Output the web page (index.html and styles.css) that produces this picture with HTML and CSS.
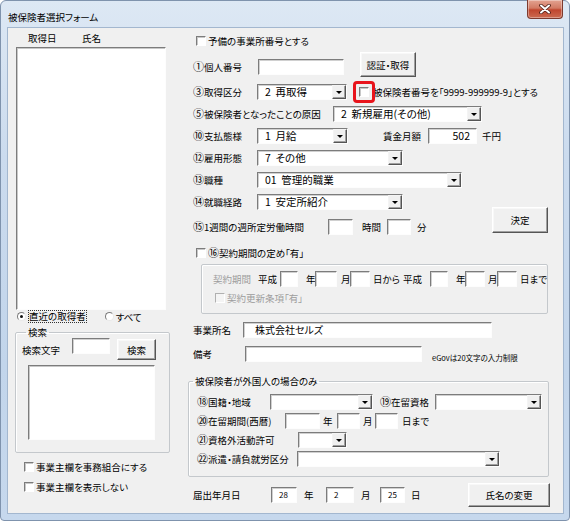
FILE: index.html
```html
<!DOCTYPE html>
<html lang="ja">
<head>
<meta charset="utf-8">
<title>被保険者選択フォーム</title>
<link rel="stylesheet" href="styles.css">
</head>
<body>
<div class="window">
  <div class="titlebar">
    <span class="title">被保険者選択フォーム</span>
    <div class="close"><svg width="14" height="10" viewBox="0 0 14 10"><path d="M3 1.5 L11 8.5 M11 1.5 L3 8.5" stroke="#4a1d15" stroke-width="3.6" stroke-linecap="round"/><path d="M3 1.5 L11 8.5 M11 1.5 L3 8.5" stroke="#fff" stroke-width="2" stroke-linecap="round"/></svg></div>
  </div>
  <div class="client">
    <div class="left">
      <div class="lhead"><span class="lh-date">取得日</span><span>氏名</span></div>
      <div class="listbox list-main"></div>
      <div class="radios">
        <span class="rb on"></span><span class="focus">直近の取得者</span>
        <span class="rb rb2"></span><span class="rtext">すべて</span>
      </div>
      <fieldset class="grp grp-search">
        <legend>検索</legend>
        <div class="srow">
          <span class="s-label">検索文字</span>
          <span class="tb s-input"></span>
          <span class="btn s-btn">検索</span>
        </div>
        <div class="listbox list-search"></div>
      </fieldset>
      <div class="lcb lcb1"><span class="cb"></span><span class="cbt">事業主欄を事務組合にする</span></div>
      <div class="lcb lcb2"><span class="cb"></span><span class="cbt">事業主欄を表示しない</span></div>
    </div>

    <div class="right">
      <div class="row r-yobi"><span class="cb"></span><span class="cbt">予備の事業所番号とする</span></div>

      <div class="row r-kojin">
        <span class="lbl w65 shift"><span class="cn">①</span>個人番号</span>
        <span class="tb in-kojin shift"></span>
        <span class="btn b-ninsho">認証・取得</span>
      </div>

      <div class="row r-kubun">
        <span class="lbl w64"><span class="cn">③</span>取得区分</span>
        <div class="sel sw90"><span class="val">2&nbsp;&nbsp;再取得</span><span class="arr"></span></div>
        <span class="mark"><span class="cb"></span></span>
        <span class="cbt narrow">被保険者番号を「9999-999999-9」とする</span>
      </div>

      <div class="row r-std r-genin">
        <span class="lbl w140"><span class="cn">⑤</span>被保険者となったことの原因</span>
        <div class="sel sw149"><span class="val">2&nbsp;&nbsp;新規雇用(その他)</span><span class="arr"></span></div>
      </div>

      <div class="row r-std">
        <span class="lbl w64"><span class="cn">⑩</span>支払態様</span>
        <div class="sel sw91"><span class="val">1&nbsp;&nbsp;月給</span><span class="arr"></span></div>
        <span class="lbl chingin">賃金月額</span>
        <span class="tb in-chingin">502</span>
        <span class="lbl senen">千円</span>
      </div>

      <div class="row r-std">
        <span class="lbl w64"><span class="cn">⑫</span>雇用形態</span>
        <div class="sel sw146"><span class="val">7&nbsp;&nbsp;その他</span><span class="arr"></span></div>
      </div>

      <div class="row r-std">
        <span class="lbl w64"><span class="cn">⑬</span>職種</span>
        <div class="sel sw205"><span class="val">01&nbsp;&nbsp;管理的職業</span><span class="arr"></span></div>
      </div>

      <div class="row r-std">
        <span class="lbl w64"><span class="cn">⑭</span>就職経路</span>
        <div class="sel sw146"><span class="val">1&nbsp;&nbsp;安定所紹介</span><span class="arr"></span></div>
      </div>

      <div class="row r-jikan">
        <span class="lbl w135"><span class="cn">⑮</span>1週間の週所定労働時間</span>
        <span class="tb in-h"></span>
        <span class="lbl jikan">時間</span>
        <span class="tb in-m"></span>
        <span class="lbl fun">分</span>
        <span class="btn b-kettei">決定</span>
      </div>

      <div class="row r-keiyaku-cb"><span class="cb"></span><span class="cbt"><span class="cn">⑯</span>契約期間の定め「有」</span></div>

      <div class="grp-keiyaku">
        <div class="krow">
          <span class="lbl dis k-kikan">契約期間</span>
          <span class="lbl k-heisei">平成</span>
          <span class="tb kw18"></span>
          <span class="lbl k-nen">年</span>
          <span class="tb kw22"></span>
          <span class="lbl k-tsuki">月</span>
          <span class="tb kw20"></span>
          <span class="lbl k-kara">日から</span>
          <span class="lbl k-heisei2">平成</span>
          <span class="tb kw18"></span>
          <span class="lbl k-nen">年</span>
          <span class="tb kw20"></span>
          <span class="lbl k-tsuki2">月</span>
          <span class="tb kw20"></span>
          <span class="lbl k-made">日まで</span>
        </div>
        <div class="krow2"><span class="cb dis-cb"></span><span class="cbt dis">契約更新条項「有」</span></div>
      </div>

      <div class="row r-std r-jigyo">
        <span class="lbl w50">事業所名</span>
        <span class="tb in-jigyo">株式会社セルズ</span>
      </div>

      <div class="row r-std r-biko">
        <span class="lbl w52">備考</span>
        <span class="tb in-biko"></span>
        <span class="egov">eGovは20文字の入力制限</span>
      </div>

      <fieldset class="grp grp-gai">
        <legend>被保険者が外国人の場合のみ</legend>
        <div class="grow g1">
          <span class="lbl w73"><span class="cn">⑱</span>国籍・地域</span>
          <div class="sel sw103"><span class="val"></span><span class="arr"></span></div>
          <span class="lbl zairyu"><span class="cn">⑲</span>在留資格</span>
          <div class="sel sw107"><span class="val"></span><span class="arr"></span></div>
        </div>
        <div class="grow">
          <span class="lbl w88"><span class="cn">⑳</span>在留期間(西暦)</span>
          <span class="tb gw35"></span>
          <span class="lbl g-nen">年</span>
          <span class="tb gw23"></span>
          <span class="lbl g-tsuki">月</span>
          <span class="tb gw23"></span>
          <span class="lbl g-made">日まで</span>
        </div>
        <div class="grow">
          <span class="lbl w101"><span class="cn">㉑</span>資格外活動許可</span>
          <div class="sel sw49"><span class="val"></span><span class="arr"></span></div>
        </div>
        <div class="grow">
          <span class="lbl w100"><span class="cn">㉒</span>派遣・請負就労区分</span>
          <div class="sel sw203"><span class="val"></span><span class="arr"></span></div>
        </div>
      </fieldset>

      <div class="row r-todoke">
        <span class="lbl w78">届出年月日</span>
        <span class="tb dt dw26">28</span>
        <span class="lbl t-nen">年</span>
        <span class="tb dt dw28">2</span>
        <span class="lbl t-tsuki">月</span>
        <span class="tb dt dw25">25</span>
        <span class="lbl t-hi">日</span>
        <span class="btn b-henko">氏名の変更</span>
      </div>
    </div>
  </div>
</div>
</body>
</html>
```
FILE: styles.css
```css
* { box-sizing: border-box; }
html, body { margin: 0; padding: 0; background: #fff; }
body {
  font-family: "Noto Sans CJK JP", "Noto Sans", sans-serif;
  font-size: 9.5px;
  color: #000;
  font-feature-settings: "palt";
}

.window {
  width: 570px;
  height: 521px;
  padding: 0 6px 7px 7px;
  border: 1px solid #7f93ad;
  border-radius: 6px 6px 4px 4px;
  background: linear-gradient(#dde8f4, #cbdbee 30%, #c2d5eb 70%, #c6d8ed);
  display: flex;
  flex-direction: column;
}

.titlebar {
  height: 27px;
  display: flex;
  align-items: flex-start;
}
.title {
  margin-top: 9px;
  line-height: 14px;
  color: #000;
}
.close {
  margin-left: auto;
  margin-top: -1px;
  width: 36px;
  height: 19px;
  border: 1px solid #7d3a2e;
  border-top: none;
  border-radius: 0 0 4px 4px;
  background: linear-gradient(#e3a391, #d27a63 45%, #c0462e 55%, #cb6a50);
  box-shadow: inset 0 0 0 1px rgba(255,255,255,0.35);
  display: flex;
  align-items: center;
  justify-content: center;
}

.client {
  height: 485px;
  background: #f0f0f0;
  box-shadow: 0 0 0 1px #a3b7cf;
  display: flex;
}

.cn {
  font-size: 11px;
  line-height: 10px;
}

/* ---------- common controls ---------- */
.cb {
  display: inline-block;
  flex: none;
  width: 10px;
  height: 10px;
  background: #fff;
  border: 1px solid;
  border-color: #7c7c7c #fff #fff #7c7c7c;
  box-shadow: inset 1px 1px #c8c8c8;
}
.cbt { margin-left: 2px; white-space: nowrap; line-height: 14px; }
.rb {
  display: inline-block;
  flex: none;
  width: 9px;
  height: 9px;
  border-radius: 50%;
  background: #fff;
  border: 1px solid;
  border-color: #7c7c7c #e8e8e8 #e8e8e8 #7c7c7c;
  position: relative;
}
.rb.on::after {
  content: "";
  position: absolute;
  left: 2px; top: 2px;
  width: 3px; height: 3px;
  border-radius: 50%;
  background: #111;
}
.tb {
  display: inline-block;
  flex: none;
  height: 16px;
  background: #fff;
  border: 1px solid;
  border-color: #7c7c7c #fdfdfd #fdfdfd #7c7c7c;
  box-shadow: inset 1px 1px #d0d0d0;
  white-space: nowrap;
  line-height: 14px;
}
.btn {
  display: flex;
  flex: none;
  align-items: center;
  justify-content: center;
  background: #f0f0f0;
  border: 1px solid;
  border-color: #fff #555 #555 #fff;
  box-shadow: inset -1px -1px #a0a0a0, inset 1px 1px #f8f8f8;
  white-space: nowrap;
}
.sel {
  display: flex;
  flex: none;
  height: 16px;
  background: #fff;
  border: 1px solid;
  border-color: #7c7c7c #fdfdfd #fdfdfd #7c7c7c;
  box-shadow: inset 1px 1px #d0d0d0;
}
.sel .val {
  flex: 1;
  padding-left: 7px;
  font-size: 10.5px;
  line-height: 14px;
  white-space: nowrap;
  overflow: hidden;
}
.sel .arr {
  flex: none;
  width: 14px;
  height: 14px;
  background: #f0f0f0;
  border: 1px solid;
  border-color: #f4f4f4 #555 #555 #f4f4f4;
  box-shadow: inset -1px -1px #a0a0a0;
  display: flex;
  align-items: center;
  justify-content: center;
}
.sel .arr::after {
  content: "";
  border-left: 3px solid transparent;
  border-right: 3px solid transparent;
  border-top: 3px solid #000;
}
.listbox {
  flex: none;
  background: #fff;
  border: 1px solid;
  border-color: #7c7c7c #fdfdfd #fdfdfd #7c7c7c;
  box-shadow: inset 1px 1px #c8c8c8;
}
.lbl { display: inline-block; flex: none; white-space: nowrap; line-height: 16px; }
.dis { color: #9d9d9d; }

.grp {
  margin: 0;
  padding: 0;
  border: 1px solid #c4c8cc;
  border-radius: 2px;
  box-shadow: inset 1px 1px #fff;
  min-width: 0;
}
.grp legend {
  padding: 0 2px;
  margin-left: 4px;
  line-height: 12px;
}

/* ---------- left column ---------- */
.left {
  width: 177px;
  flex: none;
  padding-left: 8px;
  display: flex;
  flex-direction: column;
}
.lhead {
  height: 19px;
  padding-left: 12px;
  display: flex;
  align-items: center;
}
.lh-date { width: 54px; }
.list-main { width: 150px; height: 263px; }
.radios {
  height: 13px;
  display: flex;
  align-items: center;
  padding-left: 1px;
}
.focus {
  margin-left: 2px;
  padding: 0 1px;
  outline: 1px dotted #333;
  outline-offset: -1px;
  line-height: 13px;
}
.rb2 { margin-left: 18px; }
.rtext { margin-left: 2px; }
.grp-search {
  margin-top: 3px;
  margin-left: -1px;
  width: 155px;
  height: 127px;
  padding-left: 6px;
}
.srow {
  height: 22px;
  display: flex;
}
.s-label { align-self: center; width: 50px; line-height: 14px; margin-top: 2px; }
.s-input { width: 38px; align-self: flex-start; }
.s-btn { width: 39px; height: 21px; margin-left: 7px; align-self: flex-end; }
.list-search { width: 127px; height: 75px; margin-top: 5px; margin-left: 6px; }
.lcb {
  height: 14px;
  display: flex;
  align-items: center;
  padding-left: 8px;
}
.lcb1 { margin-top: 7px; }
.lcb2 { margin-top: 6px; }

/* ---------- right column ---------- */
.right {
  width: 378px;
  flex: none;
  display: flex;
  flex-direction: column;
}
.row {
  display: flex;
  align-items: center;
  padding-left: 8px;
}
.r-std { height: 16px; margin-top: 6px; }
.r-yobi { height: 14px; margin-top: 6px; padding-left: 11px; }
.r-kojin { height: 25px; margin-top: 4px; }
.shift { margin-top: 4px; }
.w65 { width: 65px; }
.in-kojin { width: 86px; }
.b-ninsho { width: 56px; height: 25px; margin-left: 16px; }

.r-kubun { height: 22px; margin-top: 4px; }
.w64 { width: 64px; }
.sw90 { width: 90px; }
.mark {
  position: relative;
  display: flex;
  margin-left: 12px;
}
.mark::after {
  content: "";
  position: absolute;
  left: -6px; top: -6px; right: -6px; bottom: -6px;
  border: 3px solid #e8141c;
  border-radius: 4px;
}
.narrow { margin-left: 4px; }

.r-genin { margin-top: 3px; }
.w140 { width: 140px; }
.sw149 { width: 149px; }
.sw91 { width: 91px; }
.chingin { margin-left: 35px; width: 45px; }
.in-chingin {
  width: 49px;
  text-align: right;
  padding-right: 6px;
  font-size: 10.5px;
}
.senen { margin-left: 5px; }
.sw146 { width: 146px; }
.sw205 { width: 205px; }

.r-jikan {
  height: 24px;
  margin-top: 1px;
  align-items: flex-end;
}
.w135 { width: 135px; }
.in-h { width: 25px; }
.jikan { margin-left: 9px; width: 25px; }
.in-m { width: 24px; }
.fun { margin-left: 6px; }
.b-kettei { width: 56px; height: 26px; margin-left: auto; margin-right: 15px; margin-bottom: 2px; }

.r-keiyaku-cb { height: 14px; margin-top: 11px; padding-left: 11px; }

.grp-keiyaku {
  margin-top: 4px;
  margin-left: 16px;
  width: 347px;
  height: 50px;
  border: 1px solid #c4c8cc;
  border-radius: 2px;
  box-shadow: inset 1px 1px #fff;
  padding: 6px 0 0 11px;
}
.krow { height: 16px; display: flex; align-items: center; }
.k-kikan { width: 45px; }
.k-heisei { width: 22px; }
.kw18 { width: 18px; }
.kw20 { width: 20px; }
.kw22 { width: 22px; }
.k-nen { margin-left: 8px; width: 9px; }
.k-tsuki { margin-left: 4px; width: 9px; }
.k-tsuki2 { margin-left: 3px; width: 9px; }
.k-kara { margin-left: 3px; width: 30px; }
.k-heisei2 { width: 27px; }
.k-made { margin-left: 3px; }
.krow2 { height: 14px; margin-top: 4px; display: flex; align-items: center; padding-left: 2px; }
.dis-cb { background: #f4f4f4; border-color: #b0b0b0 #fff #fff #b0b0b0; box-shadow: none; }

.r-jigyo { margin-top: 8px; }
.w50 { width: 50px; }
.in-jigyo { width: 249px; padding-left: 11px; font-size: 10px; }
.r-biko { margin-top: 8px; }
.w52 { width: 52px; }
.in-biko { width: 177px; }
.egov { margin-left: 10px; font-size: 7.5px; margin-top: 6px; white-space: nowrap; }

.grp-gai {
  margin-top: 13px;
  margin-left: 3px;
  width: 361px;
  height: 102px;
}
.grow {
  height: 16px;
  margin-top: 3px;
  display: flex;
  align-items: center;
  padding-left: 8px;
}
.grow.g1 { margin-top: 7px; }
.w73 { width: 73px; }
.sw103 { width: 103px; }
.zairyu { margin-left: 7px; width: 55px; }
.sw107 { width: 107px; }
.w88 { width: 88px; }
.gw35 { width: 35px; }
.gw23 { width: 23px; }
.g-nen { margin-left: 3px; width: 14px; }
.g-tsuki { margin-left: 3px; width: 12px; }
.g-made { margin-left: 4px; }
.w101 { width: 101px; }
.sw49 { width: 49px; }
.w100 { width: 100px; }
.sw203 { width: 203px; }

.r-todoke { height: 24px; margin-top: 6px; }
.w78 { width: 78px; }
.dt { font-size: 8px; padding-left: 7px; line-height: 14px; }
.dw26 { width: 26px; }
.dw28 { width: 28px; }
.dw25 { width: 25px; }
.t-nen { margin-left: 7px; width: 22px; }
.t-tsuki { margin-left: 7px; width: 19px; }
.t-hi { margin-left: 6px; }
.b-henko { width: 82px; height: 24px; margin-left: auto; margin-right: 13px; }
```
